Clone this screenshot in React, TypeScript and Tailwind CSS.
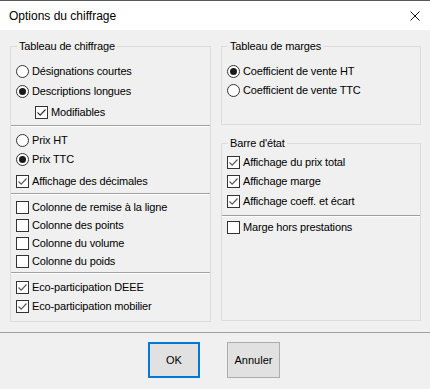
import React from 'react';

const font = { fontFamily: '"Liberation Sans", Arial, sans-serif' };

function Radio({ on }: { on?: boolean }) {
  return (
    <span className="flex h-[13px] w-[13px] shrink-0 items-center justify-center rounded-full border border-[#333333] bg-white">
      {on && <span className="h-[7px] w-[7px] rounded-full bg-[#1a1a1a]" />}
    </span>
  );
}

function Check({ on, dark }: { on?: boolean; dark?: boolean }) {
  return (
    <span className="flex h-[13px] w-[13px] shrink-0 items-center justify-center border border-[#333333] bg-white">
      {on && (
        <svg width="11" height="11" viewBox="0 0 11 11">
          <polyline
            points="1.5,5.5 4.2,8.2 9.5,2.5"
            fill="none"
            stroke={dark ? '#333333' : '#5a5a5a'}
            strokeWidth="1.2"
          />
        </svg>
      )}
    </span>
  );
}

function Row({
  kind,
  on,
  dark,
  label,
  className = '',
}: {
  kind: 'radio' | 'check';
  on?: boolean;
  dark?: boolean;
  label: string;
  className?: string;
}) {
  return (
    <div className={`flex h-[18px] items-center gap-[3px] ${className}`}>
      {kind === 'radio' ? <Radio on={on} /> : <Check on={on} dark={dark} />}
      <span className="whitespace-nowrap leading-none">{label}</span>
    </div>
  );
}

function Sep({ className = '' }: { className?: string }) {
  return <div className={`h-[2px] border-t border-b border-t-[#a0a0a0] border-b-white ${className}`} />;
}

function Group({ title, className = '', children }: { title: string; className?: string; children: React.ReactNode }) {
  return (
    <fieldset className={`border border-[#dcdcdc] ${className}`}>
      <legend className="ml-[6px] px-[2px] leading-[14px]">{title}</legend>
      {children}
    </fieldset>
  );
}

export default function App() {
  return (
    <div
      className="flex h-[389px] w-[430px] flex-col overflow-hidden bg-[#f0f0f0] text-[11px] tracking-[-0.15px] text-black"
      style={font}
    >
      {/* title bar */}
      <div className="flex h-[30px] shrink-0 items-center justify-between border-t border-[#5a5a5a] bg-white pl-[9px] pr-[10px]">
        <span className="text-[12px] tracking-normal">Options du chiffrage</span>
        <svg width="10" height="10" viewBox="0 0 10 10" className="mt-[1px]">
          <path d="M0.5 0.5 L9.5 9.5 M9.5 0.5 L0.5 9.5" stroke="#111" strokeWidth="1" />
        </svg>
      </div>

      {/* body */}
      <div className="flex h-[302px] shrink-0 gap-[10px] pl-[10px] pt-[9px]">
        <Group title="Tableau de chiffrage" className="h-[283px] w-[201px]">
          <div className="pl-[5px]">
            <Row kind="radio" label="Désignations courtes" className="mt-[9px]" />
            <Row kind="radio" on label="Descriptions longues" className="mt-[2px]" />
            <Row kind="check" on dark label="Modifiables" className="mt-[3px] pl-[19px] gap-[1px]" />
          </div>
          <Sep className="mt-[4px]" />
          <div className="pl-[5px]">
            <Row kind="radio" label="Prix HT" className="mt-[4px]" />
            <Row kind="radio" on label="Prix TTC" className="mt-[1px]" />
            <Row kind="check" on label="Affichage des décimales" className="mt-[4px]" />
          </div>
          <Sep className="mt-[3px]" />
          <div className="pl-[5px]">
            <Row kind="check" label="Colonne de remise à la ligne" className="mt-[3px]" />
            <Row kind="check" label="Colonne des points" />
            <Row kind="check" label="Colonne du volume" />
            <Row kind="check" label="Colonne du poids" />
          </div>
          <Sep className="mt-[2px]" />
          <div className="pl-[5px]">
            <Row kind="check" on label="Eco-participation DEEE" className="mt-[4px]" />
            <Row kind="check" on label="Eco-participation mobilier" className="mt-[1px]" />
          </div>
        </Group>

        <div className="flex w-[200px] flex-col">
          <Group title="Tableau de marges" className="h-[86px]">
            <div className="pl-[5px]">
              <Row kind="radio" on label="Coefficient de vente HT" className="mt-[9px]" />
              <Row kind="radio" label="Coefficient de vente TTC" className="mt-[1px]" />
            </div>
          </Group>
          <Group title="Barre d'état" className="mt-[11px] h-[185px]">
            <div className="pl-[5px]">
              <Row kind="check" on label="Affichage du prix total" className="mt-[3px]" />
              <Row kind="check" on label="Affichage marge" className="mt-[1px]" />
              <Row kind="check" on label="Affichage coeff. et écart" className="mt-[2px]" />
            </div>
            <Sep className="mt-[5px]" />
            <div className="pl-[5px]">
              <Row kind="check" label="Marge hors prestations" className="mt-[1px]" />
            </div>
          </Group>
        </div>
      </div>

      {/* footer */}
      <div className="flex flex-1 gap-[27px] border-t border-[#a0a0a0] pl-[148px] pt-[9px]">
        <button className="flex h-[36px] w-[52px] items-center justify-center border-2 border-[#0078d7] bg-[#e1e1e1] tracking-normal">
          OK
        </button>
        <button className="flex h-[36px] w-[53px] items-center justify-center border border-[#adadad] bg-[#e1e1e1] tracking-normal">
          Annuler
        </button>
      </div>
    </div>
  );
}
